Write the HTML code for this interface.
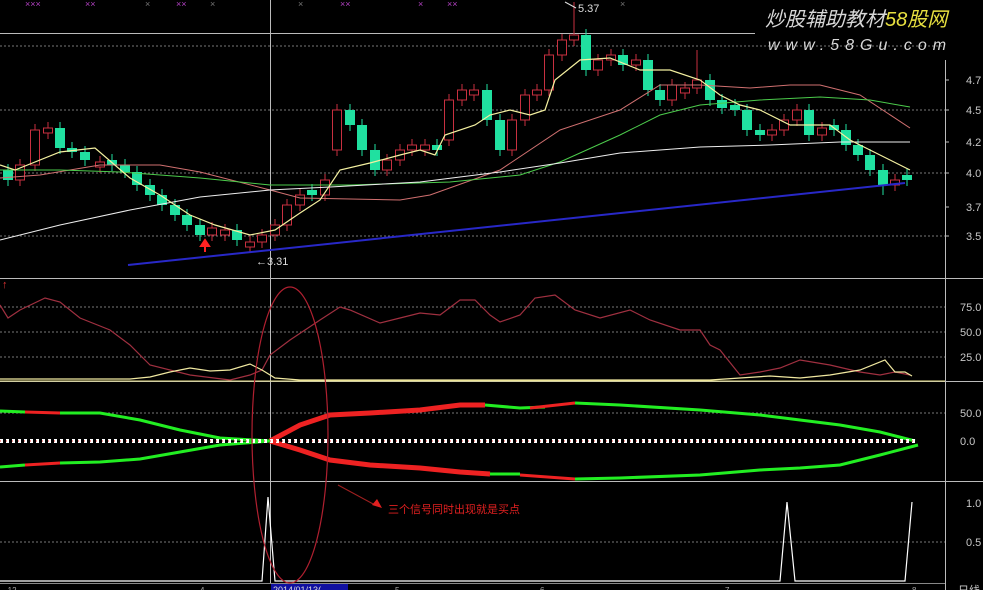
<!DOCTYPE html>
<html><head><meta charset="utf-8"><style>
html,body{margin:0;padding:0;background:#000;width:983px;height:590px;overflow:hidden}
svg{display:block}
text{font-family:"Liberation Sans","Noto Sans CJK SC",sans-serif}
.g line{stroke:#20e0a0}.g rect{fill:#20e0a0}
.r line{stroke:#c83040}.r rect{fill:#000;stroke:#c83040}
</style></head><body>
<svg width="983" height="590" viewBox="0 0 983 590" xmlns="http://www.w3.org/2000/svg">
<rect width="983" height="590" fill="#000"/>
<g stroke="#777" stroke-width="1" stroke-dasharray="2,2">
<line x1="0" y1="46" x2="945" y2="46"/><line x1="0" y1="110" x2="945" y2="110"/>
<line x1="0" y1="173" x2="945" y2="173"/><line x1="0" y1="236" x2="945" y2="236"/>
<line x1="0" y1="307" x2="945" y2="307"/><line x1="0" y1="332" x2="945" y2="332"/><line x1="0" y1="357" x2="945" y2="357"/>
<line x1="0" y1="413" x2="945" y2="413"/><line x1="0" y1="542" x2="945" y2="542"/>
</g>
<g stroke="#bbb" stroke-width="1">
<line x1="0" y1="33.5" x2="755" y2="33.5"/>
<line x1="0" y1="278.5" x2="983" y2="278.5"/>
<line x1="0" y1="381.5" x2="983" y2="381.5"/>
<line x1="0" y1="481.5" x2="983" y2="481.5"/>
<line x1="945.5" y1="60" x2="945.5" y2="590"/>
<line x1="270.5" y1="0" x2="270.5" y2="583"/>
</g>
<line x1="0" y1="381" x2="945" y2="381" stroke="#e8e08a"/>
<g class="g">
<line x1="8" y1="164" x2="8" y2="186"/><rect x="3" y="170" width="10" height="10"/>
<line x1="60" y1="122" x2="60" y2="154"/><rect x="55" y="128" width="10" height="20"/>
<line x1="72" y1="142" x2="72" y2="158"/><rect x="67" y="148" width="10" height="4"/>
<line x1="85" y1="146" x2="85" y2="166"/><rect x="80" y="152" width="10" height="8"/>
<line x1="112" y1="154" x2="112" y2="171"/><rect x="107" y="160" width="10" height="5"/>
<line x1="125" y1="159" x2="125" y2="178"/><rect x="120" y="165" width="10" height="7"/>
<line x1="137" y1="166" x2="137" y2="191"/><rect x="132" y="172" width="10" height="13"/>
<line x1="150" y1="179" x2="150" y2="201"/><rect x="145" y="185" width="10" height="10"/>
<line x1="162" y1="189" x2="162" y2="211"/><rect x="157" y="195" width="10" height="10"/>
<line x1="175" y1="199" x2="175" y2="221"/><rect x="170" y="205" width="10" height="10"/>
<line x1="187" y1="209" x2="187" y2="231"/><rect x="182" y="215" width="10" height="10"/>
<line x1="200" y1="219" x2="200" y2="241"/><rect x="195" y="225" width="10" height="10"/>
<line x1="237" y1="224" x2="237" y2="246"/><rect x="232" y="230" width="10" height="10"/>
<line x1="312" y1="184" x2="312" y2="201"/><rect x="307" y="190" width="10" height="5"/>
<line x1="350" y1="104" x2="350" y2="131"/><rect x="345" y="110" width="10" height="15"/>
<line x1="362" y1="119" x2="362" y2="156"/><rect x="357" y="125" width="10" height="25"/>
<line x1="375" y1="144" x2="375" y2="176"/><rect x="370" y="150" width="10" height="20"/>
<line x1="437" y1="139" x2="437" y2="156"/><rect x="432" y="145" width="10" height="5"/>
<line x1="487" y1="84" x2="487" y2="126"/><rect x="482" y="90" width="10" height="30"/>
<line x1="500" y1="114" x2="500" y2="156"/><rect x="495" y="120" width="10" height="30"/>
<line x1="586" y1="29" x2="586" y2="76"/><rect x="581" y="35" width="10" height="35"/>
<line x1="623" y1="49" x2="623" y2="71"/><rect x="618" y="55" width="10" height="10"/>
<line x1="648" y1="54" x2="648" y2="96"/><rect x="643" y="60" width="10" height="30"/>
<line x1="660" y1="84" x2="660" y2="106"/><rect x="655" y="90" width="10" height="10"/>
<line x1="710" y1="74" x2="710" y2="106"/><rect x="705" y="80" width="10" height="20"/>
<line x1="722" y1="94" x2="722" y2="114"/><rect x="717" y="100" width="10" height="8"/>
<line x1="735" y1="99" x2="735" y2="116"/><rect x="730" y="105" width="10" height="5"/>
<line x1="747" y1="104" x2="747" y2="136"/><rect x="742" y="110" width="10" height="20"/>
<line x1="760" y1="124" x2="760" y2="141"/><rect x="755" y="130" width="10" height="5"/>
<line x1="809" y1="104" x2="809" y2="141"/><rect x="804" y="110" width="10" height="25"/>
<line x1="834" y1="119" x2="834" y2="136"/><rect x="829" y="125" width="10" height="5"/>
<line x1="846" y1="124" x2="846" y2="151"/><rect x="841" y="130" width="10" height="15"/>
<line x1="858" y1="139" x2="858" y2="161"/><rect x="853" y="145" width="10" height="10"/>
<line x1="870" y1="149" x2="870" y2="176"/><rect x="865" y="155" width="10" height="15"/>
<line x1="883" y1="164" x2="883" y2="195"/><rect x="878" y="170" width="10" height="15"/>
<line x1="907" y1="169" x2="907" y2="186"/><rect x="902" y="175" width="10" height="5"/>
</g>
<g class="r">
<line x1="20" y1="159" x2="20" y2="186"/><rect x="15.5" y="165" width="9" height="15"/>
<line x1="35" y1="124" x2="35" y2="171"/><rect x="30.5" y="130" width="9" height="35"/>
<line x1="48" y1="122" x2="48" y2="139"/><rect x="43.5" y="128" width="9" height="5"/>
<line x1="100" y1="156" x2="100" y2="173"/><rect x="95.5" y="162" width="9" height="5"/>
<line x1="212" y1="222" x2="212" y2="241"/><rect x="207.5" y="228" width="9" height="7"/>
<line x1="225" y1="224" x2="225" y2="241"/><rect x="220.5" y="230" width="9" height="5"/>
<line x1="250" y1="236" x2="250" y2="253"/><rect x="245.5" y="242" width="9" height="5"/>
<line x1="262" y1="229" x2="262" y2="248"/><rect x="257.5" y="235" width="9" height="7"/>
<line x1="275" y1="219" x2="275" y2="241"/><rect x="270.5" y="225" width="9" height="10"/>
<line x1="287" y1="199" x2="287" y2="231"/><rect x="282.5" y="205" width="9" height="20"/>
<line x1="300" y1="189" x2="300" y2="211"/><rect x="295.5" y="195" width="9" height="10"/>
<line x1="325" y1="174" x2="325" y2="201"/><rect x="320.5" y="180" width="9" height="15"/>
<line x1="337" y1="104" x2="337" y2="156"/><rect x="332.5" y="110" width="9" height="40"/>
<line x1="387" y1="154" x2="387" y2="176"/><rect x="382.5" y="160" width="9" height="10"/>
<line x1="400" y1="144" x2="400" y2="166"/><rect x="395.5" y="150" width="9" height="10"/>
<line x1="412" y1="139" x2="412" y2="156"/><rect x="407.5" y="145" width="9" height="5"/>
<line x1="425" y1="139" x2="425" y2="156"/><rect x="420.5" y="145" width="9" height="5"/>
<line x1="449" y1="94" x2="449" y2="146"/><rect x="444.5" y="100" width="9" height="40"/>
<line x1="462" y1="84" x2="462" y2="106"/><rect x="457.5" y="90" width="9" height="10"/>
<line x1="474" y1="84" x2="474" y2="101"/><rect x="469.5" y="90" width="9" height="5"/>
<line x1="512" y1="114" x2="512" y2="156"/><rect x="507.5" y="120" width="9" height="30"/>
<line x1="525" y1="89" x2="525" y2="126"/><rect x="520.5" y="95" width="9" height="25"/>
<line x1="537" y1="84" x2="537" y2="101"/><rect x="532.5" y="90" width="9" height="5"/>
<line x1="549" y1="49" x2="549" y2="96"/><rect x="544.5" y="55" width="9" height="35"/>
<line x1="562" y1="34" x2="562" y2="61"/><rect x="557.5" y="40" width="9" height="15"/>
<line x1="574" y1="2" x2="574" y2="46"/><rect x="569.5" y="35" width="9" height="5"/>
<line x1="598" y1="54" x2="598" y2="76"/><rect x="593.5" y="60" width="9" height="10"/>
<line x1="611" y1="49" x2="611" y2="66"/><rect x="606.5" y="55" width="9" height="5"/>
<line x1="636" y1="54" x2="636" y2="71"/><rect x="631.5" y="60" width="9" height="5"/>
<line x1="672" y1="79" x2="672" y2="106"/><rect x="667.5" y="85" width="9" height="15"/>
<line x1="685" y1="82" x2="685" y2="99"/><rect x="680.5" y="88" width="9" height="5"/>
<line x1="697" y1="50" x2="697" y2="94"/><rect x="692.5" y="80" width="9" height="8"/>
<line x1="772" y1="124" x2="772" y2="141"/><rect x="767.5" y="130" width="9" height="5"/>
<line x1="784" y1="114" x2="784" y2="136"/><rect x="779.5" y="120" width="9" height="10"/>
<line x1="797" y1="104" x2="797" y2="126"/><rect x="792.5" y="110" width="9" height="10"/>
<line x1="822" y1="122" x2="822" y2="141"/><rect x="817.5" y="128" width="9" height="7"/>
<line x1="895" y1="174" x2="895" y2="191"/><rect x="890.5" y="180" width="9" height="5"/>
</g>
<polyline fill="none" stroke="#d07070" stroke-width="1" points="0,178 40,175 100,165 160,165 200,172 270,190 300,198 400,200 430,195 500,170 560,130 620,110 660,85 700,85 750,88 790,85 820,85 860,95 910,128"/>
<polyline fill="none" stroke="#4ccc4c" stroke-width="1" points="0,170 60,170 120,172 200,178 270,185 350,185 450,182 520,175 560,162 620,135 660,115 700,105 760,100 820,97 870,100 910,107"/>
<polyline fill="none" stroke="#eee" stroke-width="1" points="0,240 60,225 130,210 200,197 270,190 330,187 420,182 500,172 560,163 620,153 700,147 770,145 840,142 870,142 910,142"/>
<polyline fill="none" stroke="#f4f0a0" stroke-width="1.2" points="0,165 15,170 60,152 95,148 130,178 160,195 190,215 215,225 250,235 275,230 300,213 320,200 340,170 370,163 400,155 420,150 435,155 445,135 475,125 490,115 510,110 530,115 545,110 555,80 580,60 610,58 640,70 670,70 700,80 720,95 740,105 760,110 790,125 830,125 850,140 870,150 910,170"/>
<line x1="128" y1="265" x2="905" y2="183" stroke="#2828c8" stroke-width="2"/>
<text x="256" y="265" fill="#ddd" font-size="11">←3.31</text>
<text x="578" y="12" fill="#ddd" font-size="11">5.37</text>
<line x1="565" y1="2" x2="576" y2="8" stroke="#ddd"/>
<path d="M205 252 L205 246 L201 246 L205 240 L209 246 L205 246" fill="#f22" stroke="#f22" stroke-width="2"/>
<text x="2" y="288" fill="#d33" font-size="11">↑</text>
<g fill="#b040c0" font-size="9">
<text x="25" y="7">×××</text><text x="85" y="7">××</text><text x="176" y="7">××</text><text x="340" y="7">××</text><text x="418" y="7">×</text><text x="447" y="7">××</text>
<text x="145" y="7" fill="#777">×</text><text x="210" y="7" fill="#777">×</text><text x="298" y="7" fill="#777">×</text><text x="620" y="7" fill="#777">×</text>
</g>
<text x="765" y="26" fill="#d8d8d8" font-size="20" font-style="italic" font-family="Liberation Serif,Noto Serif CJK SC,serif">炒股辅助教材<tspan fill="#e8e040">58股网</tspan></text>
<text x="768" y="50" fill="#d8d8d8" font-size="16" font-style="italic" letter-spacing="6" font-family="Liberation Serif,serif">www.58Gu.com</text>
<polyline fill="none" stroke="#a03040" stroke-width="1.2" points="0,305 8,318 20,310 45,298 60,302 80,318 110,330 130,345 150,365 190,375 230,380 250,375 262,370 270,355 290,340 320,320 340,307 350,310 380,323 400,318 420,313 440,315 460,300 475,300 490,315 500,322 520,315 535,298 555,295 575,310 600,318 630,310 650,320 680,330 700,330 710,345 720,350 740,375 760,372 780,368 800,360 830,365 860,372 880,375 895,372 910,375"/>
<polyline fill="none" stroke="#f0e8a0" stroke-width="1.2" points="0,379 130,379 150,377 170,372 190,368 210,371 230,370 250,364 262,370 275,378 300,380 710,380 740,378 770,376 800,378 830,375 860,370 885,360 895,372 905,372 912,376"/>
<g fill="none" stroke-width="3">
<polyline stroke="#22ee22" points="0,411 25,412"/><polyline stroke="#ee2222" points="25,412 60,413"/>
<polyline stroke="#22ee22" points="60,413 100,413 140,420 180,430 220,438 270,441"/>
<polyline stroke="#ee2222" stroke-width="5" points="270,441 300,425 330,415 370,413 420,410 460,405 485,405"/>
<polyline stroke="#22ee22" points="485,405 520,408 545,407"/><polyline stroke="#ee2222" points="530,408 575,403"/>
<polyline stroke="#22ee22" points="575,403 620,405 700,410 760,415 800,420 840,425 880,432 915,441"/>
<polyline stroke="#22ee22" points="0,467 25,465"/><polyline stroke="#ee2222" points="25,465 60,463"/>
<polyline stroke="#22ee22" points="60,463 100,462 140,459 180,452 220,445 270,441"/>
<polyline stroke="#ee2222" stroke-width="5" points="270,441 300,450 330,460 370,465 420,468 460,472 490,474"/>
<polyline stroke="#22ee22" points="490,474 520,474"/><polyline stroke="#ee2222" points="520,475 575,479"/>
<polyline stroke="#22ee22" points="575,479 620,478 700,475 760,470 800,468 840,465 880,455 918,445"/>
</g>
<line x1="0" y1="441" x2="915" y2="441" stroke="#fff" stroke-width="4" stroke-dasharray="3,3"/>
<line x1="0" y1="441" x2="915" y2="441" stroke="#e33" stroke-width="1" stroke-dasharray="1,5"/>
<polyline fill="none" stroke="#fff" stroke-width="1.2" points="0,581 262,581 268,497 275,581 780,581 787,502 795,581 905,581 912,502"/>
<line x1="0" y1="583.5" x2="945" y2="583.5" stroke="#888"/>
<ellipse cx="290" cy="435" rx="38" ry="148" fill="none" stroke="#b02030" stroke-width="1.2"/>
<line x1="338" y1="485" x2="375" y2="505" stroke="#a02020"/>
<path d="M382 508 L372 505 L377 499 Z" fill="#e02020"/>
<text x="388" y="513" fill="#e02020" font-size="11">三个信号同时出现就是买点</text>
<rect x="271" y="584" width="77" height="8" fill="#1010a0"/>
<text x="273" y="593" fill="#ddd" font-size="9">2014/01/13(</text>
<g fill="#aaa" font-size="8"><text x="5" y="593">-12</text><text x="200" y="593">4</text><text x="395" y="593">5</text><text x="540" y="593">6</text><text x="725" y="593">7</text><text x="912" y="593">8</text></g>
<g fill="#c8c8c8" font-size="11">
<text x="966" y="84">4.7</text><text x="966" y="114">4.5</text><text x="966" y="146">4.2</text><text x="966" y="177">4.0</text><text x="966" y="211">3.7</text><text x="966" y="240">3.5</text>
<text x="960" y="311">75.0</text><text x="960" y="336">50.0</text><text x="960" y="361">25.0</text>
<text x="960" y="417">50.0</text><text x="960" y="445">0.0</text>
<text x="966" y="507">1.0</text><text x="966" y="546">0.5</text>
<text x="958" y="594">日线</text>
</g>
<g stroke="#bbb"><line x1="945" y1="80" x2="949" y2="80"/><line x1="945" y1="110" x2="949" y2="110"/><line x1="945" y1="142" x2="949" y2="142"/><line x1="945" y1="173" x2="949" y2="173"/><line x1="945" y1="207" x2="949" y2="207"/><line x1="945" y1="236" x2="949" y2="236"/></g>
</svg>
</body></html>
